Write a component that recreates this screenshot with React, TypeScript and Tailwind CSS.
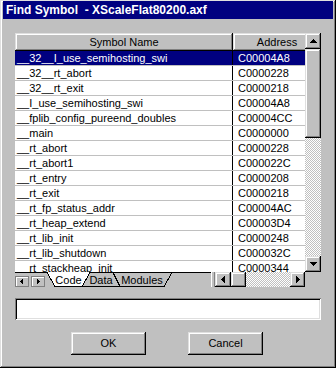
import React from "react";

const rows: [string, string][] = [
  ["__32__I_use_semihosting_swi", "C00004A8"],
  ["__32__rt_abort", "C0000228"],
  ["__32__rt_exit", "C0000218"],
  ["__I_use_semihosting_swi", "C00004A8"],
  ["__fplib_config_pureend_doubles", "C00004CC"],
  ["__main", "C0000000"],
  ["__rt_abort", "C0000228"],
  ["__rt_abort1", "C000022C"],
  ["__rt_entry", "C0000208"],
  ["__rt_exit", "C0000218"],
  ["__rt_fp_status_addr", "C00004AC"],
  ["__rt_heap_extend", "C00003D4"],
  ["__rt_lib_init", "C0000248"],
  ["__rt_lib_shutdown", "C000032C"],
  ["__rt_stackheap_init", "C0000344"],
];

const raised =
  "bg-[#c0c0c0] shadow-[inset_-1px_-1px_#000,inset_1px_1px_#dfdfdf,inset_-2px_-2px_#808080,inset_2px_2px_#fff]";
const dither =
  "bg-[image:repeating-conic-gradient(#c0c0c0_0_25%,#fff_0_50%)] bg-[length:2px_2px]";

const Arrow = ({ dir }: { dir: "up" | "down" | "left" | "right" }) => {
  const pts = {
    up: "3.5,0 7,4 0,4",
    down: "0,0 7,0 3.5,4",
    left: "4,0 4,7 0,3.5",
    right: "0,0 0,7 4,3.5",
  }[dir];
  const vert = dir === "up" || dir === "down";
  return (
    <svg width={vert ? 7 : 4} height={vert ? 4 : 7} shapeRendering="crispEdges">
      <polygon points={pts} fill="#000" />
    </svg>
  );
};

// sheet tabs along the bottom of the list
const Tabs = () => (
  <svg width="196" height="15" className="block" shapeRendering="crispEdges">
    <line x1="0" y1="0.5" x2="196" y2="0.5" stroke="#000" />
    <rect x="0.5" y="4.5" width="13" height="10" fill="#c0c0c0" stroke="#808080" />
    <line x1="1" y1="5.5" x2="13" y2="5.5" stroke="#fff" />
    <line x1="1.5" y1="5" x2="1.5" y2="14" stroke="#fff" />
    <polygon points="5,9.5 8,6.5 8,12.5" fill="#000" />
    <rect x="16.5" y="4.5" width="13" height="10" fill="#c0c0c0" stroke="#808080" />
    <line x1="17" y1="5.5" x2="29" y2="5.5" stroke="#fff" />
    <line x1="17.5" y1="5" x2="17.5" y2="14" stroke="#fff" />
    <polygon points="22,6.5 25,9.5 22,12.5" fill="#000" />
    <polygon points="59,0.5 67,14.5 105,14.5 113,0.5" fill="#c0c0c0" stroke="#000" />
    <text x="86" y="11.5" textAnchor="middle" fontSize="11" fontFamily="'Liberation Sans', sans-serif">
      Data
    </text>
    <polygon points="98,0.5 105,14.5 149,14.5 157,0.5" fill="#c0c0c0" stroke="#000" />
    <text x="127" y="11.5" textAnchor="middle" fontSize="11" fontFamily="'Liberation Sans', sans-serif">
      Modules
    </text>
    <polygon points="32,0 40,14.5 67,14.5 75,0" fill="#fff" />
    <polyline points="32,0.5 40,14.5 67,14.5 75,0.5" fill="none" stroke="#000" />
    <text x="53.5" y="11.5" textAnchor="middle" fontSize="11" fontFamily="'Liberation Sans', sans-serif">
      Code
    </text>
  </svg>
);

export default function App() {
  return (
    <div className="w-[336px] h-[368px] bg-[#c0c0c0] pt-[1px] px-[3px] font-['Liberation_Sans',sans-serif] text-[11px] text-black shadow-[inset_-1px_-1px_#000,inset_1px_1px_#dfdfdf,inset_-2px_-2px_#808080,inset_2px_2px_#fff]">
      <div className="h-[18px] bg-[#000080] text-white font-bold text-[12px] pl-[3px] flex items-center whitespace-pre">
        Find Symbol  - XScaleFlat80200.axf
      </div>

      <div className="ml-[12px] mt-[14px] w-[306px]">
        <div className="flex h-[239px]">
          <div className="w-[290px] overflow-hidden bg-white">
            <div className="flex h-[18px] w-[306px]">
              <div className={`w-[218px] ${raised} flex items-center justify-center`}>Symbol Name</div>
              <div className={`w-[88px] ${raised} flex items-center justify-center`}>Address</div>
            </div>
            {rows.map(([name, addr], i) => (
              <div
                key={i}
                className={`flex h-[15px] leading-[14px] border-b border-[#c0c0c0] ${
                  i === 0 ? "bg-[#000080] text-white" : ""
                }`}
              >
                <div className="w-[218px] pl-[2px] border-r border-black whitespace-nowrap overflow-hidden">
                  {name}
                </div>
                <div className="pl-[5px] whitespace-nowrap">{addr}</div>
              </div>
            ))}
          </div>
          <div className="w-[16px] flex flex-col">
            <div className={`h-[16px] ${raised} flex items-center justify-center`}>
              <Arrow dir="up" />
            </div>
            <div className={`h-[89px] ${raised}`} />
            <div className={`flex-1 ${dither}`} />
            <div className={`h-[16px] ${raised} flex items-center justify-center`}>
              <Arrow dir="down" />
            </div>
          </div>
        </div>

        <div className="flex h-[15px]">
          <Tabs />
          <div className="w-[4px] border-l border-white border-r border-r-[#808080]" />
          <div className="w-[90px] flex">
            <div className={`w-[16px] ${raised} flex items-center justify-center`}>
              <Arrow dir="left" />
            </div>
            <div className={`w-[15px] ${raised}`} />
            <div className={`flex-1 ${dither}`} />
            <div className={`w-[15px] ${raised} flex items-center justify-center`}>
              <Arrow dir="right" />
            </div>
          </div>
          <div className="w-[16px]" />
        </div>

        <div className="mt-[11px] h-[22px] bg-white shadow-[inset_1px_1px_#808080,inset_-1px_-1px_#fff,inset_2px_2px_#000,inset_-2px_-2px_#dfdfdf]" />
      </div>

      <div className="mt-[12px] ml-[68px] flex gap-[42px]">
        <button className={`w-[75px] h-[23px] ${raised} flex items-center justify-center`}>OK</button>
        <button className={`w-[75px] h-[23px] ${raised} flex items-center justify-center`}>Cancel</button>
      </div>
    </div>
  );
}
